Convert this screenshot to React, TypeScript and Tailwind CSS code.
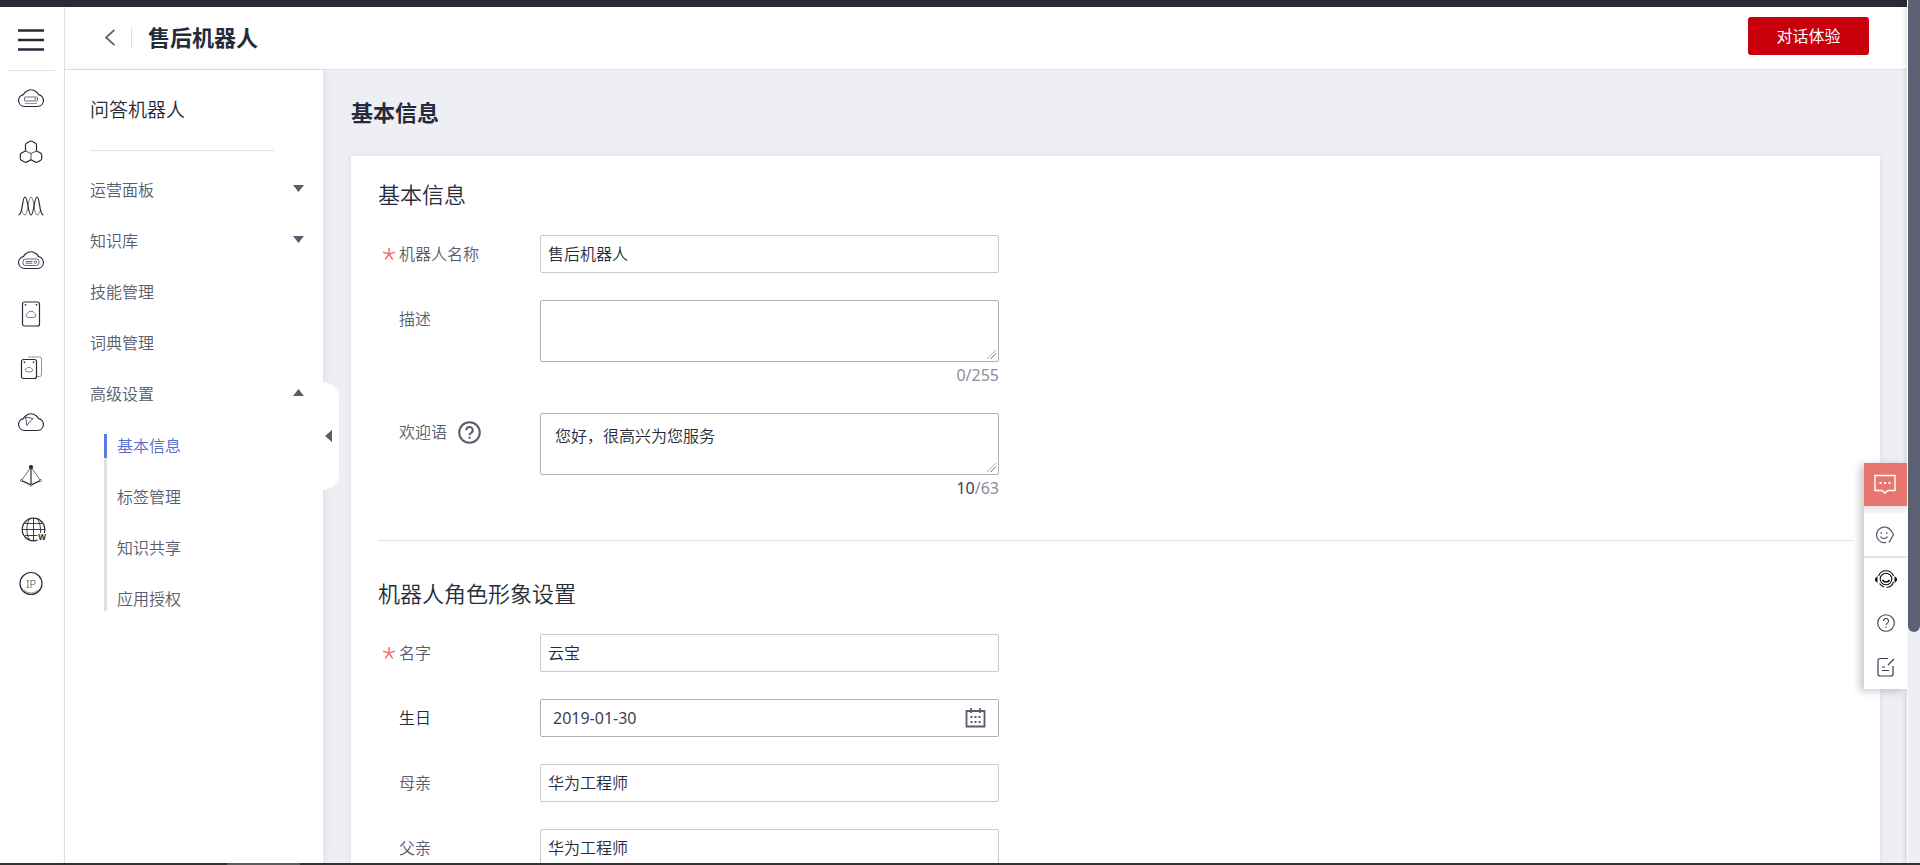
import { useState } from 'react';
import type { ReactNode } from 'react';

interface NavItem {
  label: string;
  caret?: 'up' | 'down';
}

const navItems: NavItem[] = [
  { label: '运营面板', caret: 'down' },
  { label: '知识库', caret: 'down' },
  { label: '技能管理' },
  { label: '词典管理' },
  { label: '高级设置', caret: 'up' },
];

const subItems = ['基本信息', '标签管理', '知识共享', '应用授权'];

const cloudPath = 'M6.500 21.500a6 6 0 0 1-1-11.900 7.800 7.800 0 0 1 2.500-3 8 8 0 0 1 10 0 7.800 7.800 0 0 1 2.500 3 6 6 0 0 1-1 11.900Z';

const railIcons: { name: string; icon: ReactNode }[] = [
  {
    name: '弹性云服务器',
    icon: (
      <>
        <path d={cloudPath} />
        <rect x="6.500" y="12" width="13" height="4" rx="1" strokeWidth=".7" />
        <path d="M16.500 14h1.500" />
        <path d="M7 18.500h12" strokeWidth=".5" />
      </>
    ),
  },
  {
    name: '裸金属服务器',
    icon: (
      <>
        <path d="M7.500 12V6q0-1.200 1-1.800L12 2.300q1-.6 2 0l3.500 1.900q1 .6 1 1.800v6l4 2q1.200.7 1.200 2v3.500q0 1-1 1.700l-3.200 1.900q-1 .6-2 0L13 20.800l-4.500 2.300q-1 .6-2 0l-3.200-1.900q-1-.7-1-1.700V16q0-1.300 1.200-2Z" />
        <path d="M7.500 12 13 14.500l5.500-2.500M13 14.500v6.300" strokeWidth=".8" />
      </>
    ),
  },
  {
    name: '弹性伸缩',
    icon: (
      <>
        <path d="M.5 22C5 22 4 4 7 4s3 18 6 18 3-18 6-18 2 18 6.500 18" />
        <path d="M3.500 17c1 3.500 2 5 3.500 5 3 0 3-18 6-18s3 18 6 18c1.500 0 2.500-1.500 3.500-5" strokeWidth=".6" />
      </>
    ),
  },
  {
    name: '云硬盘',
    icon: (
      <>
        <path d={cloudPath} />
        <rect x="5" y="12" width="16" height="6.500" rx="2.500" strokeWidth=".7" />
        <path d="M7.500 14.500h7M7.500 16.200h7" strokeWidth=".7" />
        <circle cx="17.500" cy="15.200" r="1.200" strokeWidth=".7" />
      </>
    ),
  },
  {
    name: '专属存储',
    icon: (
      <>
        <rect x="4.500" y="1" width="17" height="24" rx="2" />
        <path d="M10.300 16.500a2.200 2.200 0 0 1-.6-4.300 3.700 3.700 0 0 1 6.600 0 2.200 2.200 0 0 1-.6 4.300Z" strokeWidth=".6" />
        <path d="M6.800 3.700h1.400M17.800 3.700h1.400" strokeWidth="1.400" />
      </>
    ),
  },
  {
    name: '云备份',
    icon: (
      <>
        <path d="M10 2h11.500a2 2 0 0 1 2 2v15.500a2 2 0 0 1-2 2H19" strokeWidth=".5" />
        <rect x="3.500" y="4.500" width="15" height="19" rx="2" />
        <path d="M9 16.800a1.700 1.700 0 0 1-.4-3.300 2.900 2.900 0 0 1 4.800 0 1.700 1.700 0 0 1-.4 3.300Z" strokeWidth=".6" />
        <path d="M5.800 7.200h1.400M14.800 7.200h1.400" strokeWidth="1.400" />
      </>
    ),
  },
  {
    name: '内容分发',
    icon: (
      <>
        <path d={cloudPath} />
        <path d="M7.500 8 9 16.500l2.500-3.500 3.500-3.500Z" strokeWidth=".8" />
      </>
    ),
  },
  {
    name: '弹性负载均衡',
    icon: (
      <>
        <path d="M13 4v18" />
        <path d="M13 4 3.500 17.500 13 22l9.500-4.500Z" strokeWidth=".7" />
        <path d="M3.500 17.500 13 22l9.500-4.500" />
        <circle cx="13" cy="4" r="1.500" fill="#252b3a" />
        <circle cx="3.500" cy="17.500" r="1" fill="#fff" strokeWidth=".7" />
        <circle cx="22.500" cy="17.500" r="1" fill="#fff" strokeWidth=".7" />
        <circle cx="13" cy="22" r="1" fill="#fff" strokeWidth=".7" />
      </>
    ),
  },
  {
    name: '域名注册',
    icon: (
      <>
        <circle cx="15.500" cy="12.500" r="11.300" />
        <path d="M15.500 1.200v22.600M4 12.500h23M7 6.500h17M7 18.500h17M11.500 2C8 8 8 17 11.500 23M19.500 2C22 6 23 11 22.500 17" strokeWidth=".9" />
        <path d="M19.500 16H29V25H19.500Z" fill="#fff" stroke="none" />
        <text x="24" y="23" textAnchor="middle" fontSize="8" fill="#252b3a" stroke="none" className="font-bold">W</text>
      </>
    ),
  },
  {
    name: '弹性公网IP',
    icon: (
      <>
        <circle cx="13" cy="12.500" r="11" />
        <text x="13" y="16.500" textAnchor="middle" fontSize="11" fill="#3c4150" stroke="none" className="font-light">IP</text>
        <path d="M6 19a9.500 9.500 0 0 0 14 0" strokeWidth=".5" />
      </>
    ),
  },
];

function IconRail() {
  return (
    <aside className="flex w-[65px] shrink-0 flex-col items-center border-r border-[#dfe1e6] bg-white pr-[2px]">
      <button type="button" aria-label="菜单" className="flex h-16 w-[47px] shrink-0 items-center justify-center border-b border-[#dfe1e6] pt-[2px]">
        <svg width="26" height="22" viewBox="0 0 26 22" stroke="#252b3a" strokeWidth="2.400">
          <path d="M0 1.500h26M0 11h26M0 20.500h26" />
        </svg>
      </button>
      <nav className="flex flex-col">
        {railIcons.map(({ name, icon }) => (
          <a key={name} href="#" aria-label={name} className="flex h-[54px] w-[47px] items-center justify-center">
            <svg className="overflow-visible" width="26" height="26" viewBox="0 0 26 26" fill="none" stroke="#252b3a" strokeWidth="1.200" strokeLinejoin="round">
              {icon}
            </svg>
          </a>
        ))}
      </nav>
    </aside>
  );
}

function Caret({ direction }: { direction: 'up' | 'down' }) {
  return (
    <svg className="mb-[2px]" width="11" height="7" viewBox="0 0 11 7" fill="#575d6c">
      <path d={direction === 'down' ? 'M0 0h11L5.500 7Z' : 'M0 7h11L5.500 0Z'} />
    </svg>
  );
}

function SideNav({ active, onSelect }: { active: string; onSelect: (label: string) => void }) {
  return (
    <aside className="relative z-10 w-[258px] shrink-0 bg-white shadow-[2px_0_8px_rgba(0,0,0,0.06)]">
      <h2 className="mr-[49px] ml-[25px] flex h-[81px] items-center border-b border-[#dfe1e6] text-[19px] text-[#252b3a]">问答机器人</h2>
      <nav className="pt-[13px] text-base text-[#575d6c]">
        {navItems.map((item) => (
          <a key={item.label} href="#" className="flex h-[51px] items-center justify-between pr-[19px] pl-[25px]">
            {item.label}
            {item.caret && <Caret direction={item.caret} />}
          </a>
        ))}
        <div className="mt-[15px] ml-[39px] border-l-3 border-[#dfe1e6]">
          <div className="flex flex-col gap-[27px]">
            {subItems.map((label) => (
              <a
                key={label}
                href="#"
                onClick={() => onSelect(label)}
                className={
                  label === active
                    ? '-ml-[3px] block border-l-3 border-[#5e7ce0] pl-[10px] text-base text-[#526ecc]'
                    : 'block pl-[10px] text-base'
                }
              >
                {label}
              </a>
            ))}
          </div>
        </div>
      </nav>
      <button type="button" aria-label="收起" className="absolute top-[312px] left-full flex h-[108px] w-4 items-center rounded-r-2xl bg-white pl-[2px]">
        <svg width="7" height="12" viewBox="0 0 7 12" fill="#575d6c">
          <path d="M7 0v12L0 6Z" />
        </svg>
      </button>
    </aside>
  );
}

interface FieldProps {
  id: string;
  label: string;
  required?: boolean;
  dark?: boolean;
  help?: boolean;
  children: ReactNode;
}

function Field({ id, label, required, dark, help, children }: FieldProps) {
  return (
    <div className="flex items-start">
      <div className="flex h-[38px] w-[162px] shrink-0 items-center">
        <span aria-hidden className="flex w-[21px] justify-end pr-[4px]">
          {required && (
            <svg width="12" height="12" viewBox="0 0 12 12" stroke="#f66f6a" strokeWidth="1.500">
              <path d="M6 0v6M0 4.300 6 6l6-1.700M2.300 11.500 6 6l3.700 5.500" fill="none" />
            </svg>
          )}
        </span>
        <label htmlFor={id} className={dark ? 'text-[#252b3a]' : 'text-[#575d6c]'}>{label}</label>
        {help && (
          <button type="button" aria-label="帮助" className="ml-[11px]">
            <svg width="23" height="23" viewBox="0 0 23 23" fill="none" stroke="#575d6c" strokeWidth="2">
              <circle cx="11.500" cy="11.500" r="10.300" />
              <path d="M8.300 9.200a3.200 3.200 0 1 1 4.800 2.700c-1.100.6-1.600 1.100-1.600 2.400M11.500 15.700v2" />
            </svg>
          </button>
        )}
      </div>
      <div className="w-full max-w-[459px]">{children}</div>
    </div>
  );
}

const inputClass = 'block h-[38px] w-full rounded-[2px] border border-[#c9cacd] bg-white px-[7px] pb-[2px] text-[#252b3a] outline-none';
const areaClass =
  'block h-[62px] w-full resize rounded-[2px] border border-[#adb0b8] bg-white px-[14px] py-[10px] text-[#252b3a] outline-none [&::-webkit-resizer]:bg-[linear-gradient(135deg,transparent_45%,#b0b3ba_45%,#b0b3ba_54%,transparent_54%,transparent_66%,#b0b3ba_66%,#b0b3ba_75%,transparent_75%)] [&::-webkit-resizer]:bg-[length:9px_9px] [&::-webkit-resizer]:bg-[position:4px_4px] [&::-webkit-resizer]:bg-no-repeat';

function BasicInfo() {
  const [desc, setDesc] = useState('');
  const [welcome, setWelcome] = useState('您好，很高兴为您服务');

  return (
    <section>
      <h2 className="mb-[25px] text-[22px] leading-8 text-[#252b3a]">基本信息</h2>
      <div className="flex flex-col gap-[27px]">
        <Field id="name" label="机器人名称" required>
          <input id="name" defaultValue="售后机器人" className={inputClass} />
        </Field>
        <Field id="desc" label="描述">
          <textarea id="desc" value={desc} maxLength={255} onChange={(e) => setDesc(e.target.value)} className={areaClass} />
          <p className="mt-[2px] text-right leading-[22px] font-normal text-[#8a8e99]">{desc.length}/255</p>
        </Field>
        <Field id="welcome" label="欢迎语" help>
          <textarea id="welcome" value={welcome} maxLength={63} onChange={(e) => setWelcome(e.target.value)} className={areaClass} />
          <p className="mt-[2px] text-right leading-[22px] font-normal text-[#8a8e99]">
            <span className="text-[#3c4150]">{welcome.length}</span>/63
          </p>
        </Field>
      </div>
    </section>
  );
}

function RoleSettings() {
  return (
    <section>
      <h2 className="mb-[25px] text-[22px] leading-8 text-[#252b3a]">机器人角色形象设置</h2>
      <div className="flex flex-col gap-[27px]">
        <Field id="nickname" label="名字" required>
          <input id="nickname" defaultValue="云宝" className={inputClass} />
        </Field>
        <Field id="birthday" label="生日" dark>
          <div className="flex h-[38px] items-center rounded-[2px] border border-[#adb0b8] px-3">
            <input id="birthday" defaultValue="2019-01-30" className="min-w-0 flex-1 font-normal text-[#3c4150] outline-none" />
            <button type="button" aria-label="选择日期">
              <svg width="21" height="20" viewBox="0 0 21 20" fill="none" stroke="#575d6c" strokeWidth="1.800">
                <path d="M1.500 3h18v15.500h-18ZM6 0v5M15 0v5" />
                <path d="M5.500 9h2M9.500 9h2M13.500 9h2M5.500 14h2M9.500 14h2M13.500 14h2" strokeWidth="2" />
              </svg>
            </button>
          </div>
        </Field>
        <Field id="mother" label="母亲">
          <input id="mother" defaultValue="华为工程师" className={inputClass} />
        </Field>
        <Field id="father" label="父亲">
          <input id="father" defaultValue="华为工程师" className={inputClass} />
        </Field>
      </div>
    </section>
  );
}

function FloatingTools() {
  return (
    <div className="absolute top-[463px] right-[13px] z-20 flex w-[43px] flex-col bg-white shadow-[-4px_2px_8px_rgba(0,0,0,0.22)]">
      <button type="button" aria-label="在线咨询" className="flex h-[43px] items-center justify-center bg-[#e7766f] pr-px pb-[2px]">
        <svg width="22" height="20" viewBox="0 0 22 20" fill="none" stroke="#fff" strokeWidth="1.500">
          <path d="M1 1.500h20v15h-7L11 19l-3-2.500H1Z" />
          <path d="M5.500 9h2M10 9h2M14.500 9h2" strokeWidth="2" />
        </svg>
      </button>
      <div className="h-[7px] bg-linear-to-b from-[#e8e8e8] to-[#f6f6f6]" />
      <button type="button" aria-label="满意度" className="flex h-[45px] items-center justify-center border-b-2 border-[#dfe1e6] pr-px">
        <svg width="20" height="18" viewBox="0 0 20 18" fill="none" stroke="#575d6c" strokeWidth="1.300">
          <path d="M11 16.500A7.800 7.800 0 1 1 15.500 4l3 4.500L14 16.500" />
          <path d="M5.500 10.500a4 4 0 0 0 7 0M5.500 7H7M11 7h1.500" />
        </svg>
      </button>
      <button type="button" aria-label="智能客服" className="flex h-[43px] items-center justify-center">
        <svg width="22" height="19" viewBox="0 0 22 19" fill="none" stroke="#111" strokeWidth="1.100">
          <circle cx="11" cy="9" r="5.800" />
          <path d="M3.500 6a8 8 0 0 1 15 0M18.500 12a8 8 0 0 1-7 5.500M4.500 13.500A8 8 0 0 0 9 17" />
          <path d="M7.500 10a4 4 0 0 0 7 0" strokeWidth="1.600" />
          <path d="M2.500 6v7L0 10.500v-2ZM19.500 6v7l2.500-2.500v-2Z" fill="#111" stroke="none" />
        </svg>
      </button>
      <button type="button" aria-label="帮助中心" className="flex h-[44px] items-center justify-center">
        <svg width="18" height="18" viewBox="0 0 18 18" fill="none" stroke="#3a3f4b" strokeWidth="1.100">
          <circle cx="9" cy="9" r="8.300" />
          <path d="M6.500 7a2.500 2.500 0 1 1 3.800 2.100C9.400 9.700 9 10.200 9 11.300M9 12.800V14" />
        </svg>
      </button>
      <button type="button" aria-label="意见反馈" className="flex h-[44px] items-center justify-center">
        <svg width="18" height="20" viewBox="0 0 18 20" fill="none" stroke="#3a3f4b" strokeWidth="1.200">
          <path d="M11 1.500H3a2 2 0 0 0-2 2V17a2 2 0 0 0 2 2h11a2 2 0 0 0 2-2V9M17 2l-6 6M5 10h3M5 13.500h7" />
        </svg>
      </button>
    </div>
  );
}

export default function App() {
  const [active, setActive] = useState('基本信息');

  return (
    <div className="relative flex h-screen flex-col overflow-hidden bg-[#eeeff5] text-base font-[350] [font-family:'Noto_Sans','Noto_Sans_CJK_SC',sans-serif]">
      <div className="flex min-h-0 flex-1">
        <div className="flex min-w-0 flex-1 flex-col">
          <div className="h-[7px] shrink-0 bg-[#282b33]" />
          <div className="flex min-h-0 flex-1">
            <IconRail />
            <div className="flex min-w-0 flex-1 flex-col">
              <header className="flex h-[63px] shrink-0 items-center border-b border-[#dfe1e6] bg-white pr-[38px] pb-[2px] pl-[39px]">
                <button type="button" aria-label="返回" className="border-r border-[#dfe1e6] py-[2px] pr-[15px]">
                  <svg width="12" height="17" viewBox="0 0 12 17" fill="none" stroke="#575d6c" strokeWidth="1.700">
                    <path d="M10.500.8 2 8.500l8.500 7.700" />
                  </svg>
                </button>
                <h1 className="ml-4 text-[22px] font-bold text-[#252b3a]">售后机器人</h1>
                <button type="button" className="mb-[2px] ml-auto h-[38px] w-[121px] rounded-[3px] bg-[#c7000b] font-normal text-white">对话体验</button>
              </header>
              <div className="flex min-h-0 flex-1">
                <SideNav active={active} onSelect={setActive} />
                <main className="min-w-0 flex-1 overflow-hidden pr-[27px] pl-7">
                  <h1 className="flex h-[86px] items-center pb-[2px] text-[22px] font-bold text-[#252b3a]">{active}</h1>
                  <div className="bg-white px-[27px] pt-[22px] pb-10 shadow-[0_0_6px_rgba(0,0,0,0.08)]">
                    <BasicInfo />
                    <hr className="mt-[41px] mb-[36px] border-[#dfe1e6]" />
                    <RoleSettings />
                  </div>
                </main>
              </div>
            </div>
          </div>
        </div>
        <div className="z-10 w-[13px] shrink-0 border-l border-white shadow-[-2px_0_5px_rgba(0,0,0,0.1)]">
          <div className="h-[632px] rounded-b-md bg-[#5c6173]" />
        </div>
      </div>
      <FloatingTools />
      <footer className="h-[2px] shrink-0 bg-[#333]">
        <div className="ml-[227px] h-full w-[73px] bg-[#5f5f5f]" />
      </footer>
    </div>
  );
}
